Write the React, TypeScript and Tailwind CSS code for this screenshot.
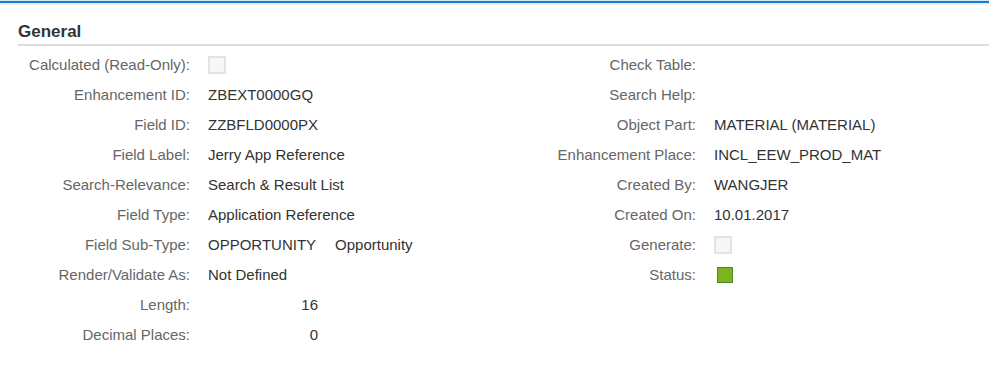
import React from 'react'

type Field = {
  label: string
  value?: React.ReactNode
}

const Checkbox = () => (
  <span className="block w-[18px] h-[18px] border-2 border-[#e3e3e3] bg-[#f7f7f7]" />
)

const StatusBox = () => (
  <span className="block w-[16px] h-[16px] ml-[3px] border border-[#4e8a27] bg-[#79b51c]" />
)

const Num = ({ children }: { children: React.ReactNode }) => (
  <span className="block w-[110px] text-right">{children}</span>
)

const leftFields: Field[] = [
  { label: 'Calculated (Read-Only):', value: <Checkbox /> },
  { label: 'Enhancement ID:', value: 'ZBEXT0000GQ' },
  { label: 'Field ID:', value: 'ZZBFLD0000PX' },
  { label: 'Field Label:', value: 'Jerry App Reference' },
  { label: 'Search-Relevance:', value: 'Search & Result List' },
  { label: 'Field Type:', value: 'Application Reference' },
  {
    label: 'Field Sub-Type:',
    value: (
      <span className="flex gap-[19px]">
        <span>OPPORTUNITY</span>
        <span>Opportunity</span>
      </span>
    ),
  },
  { label: 'Render/Validate As:', value: 'Not Defined' },
  { label: 'Length:', value: <Num>16</Num> },
  { label: 'Decimal Places:', value: <Num>0</Num> },
]

const rightFields: Field[] = [
  { label: 'Check Table:' },
  { label: 'Search Help:' },
  { label: 'Object Part:', value: 'MATERIAL (MATERIAL)' },
  { label: 'Enhancement Place:', value: 'INCL_EEW_PROD_MAT' },
  { label: 'Created By:', value: 'WANGJER' },
  { label: 'Created On:', value: '10.01.2017' },
  { label: 'Generate:', value: <Checkbox /> },
  { label: 'Status:', value: <StatusBox /> },
]

const FieldList = ({ fields, labelWidth }: { fields: Field[]; labelWidth: string }) => (
  <div className={`grid ${labelWidth} gap-x-[18px] auto-rows-[30px]`}>
    {fields.map((f) => (
      <React.Fragment key={f.label}>
        <div className="flex items-center justify-end text-[#666666] whitespace-nowrap">{f.label}</div>
        <div className="flex items-center text-[#333333] whitespace-nowrap">{f.value}</div>
      </React.Fragment>
    ))}
  </div>
)

export default function App() {
  return (
    <div className="w-[989px] h-[384px] bg-white overflow-hidden" style={{ fontFamily: '"Liberation Sans", Arial, sans-serif' }}>
      <div className="h-[1px] bg-[#d7e6f3]" />
      <div className="h-[2px] bg-[#1b7dcc]" />
      <div className="h-[3px] bg-gradient-to-b from-[#e4e4e4] to-white" />

      <div className="pl-[18px]">
        <div className="h-[40px] flex items-end pb-[2px] border-b-2 border-[#dedede]">
          <h2 className="text-[17px] leading-[20px] font-bold text-[#333333]">General</h2>
        </div>

        <div className="grid grid-cols-[476px_1fr] pt-[4px] text-[15px] leading-[18px]">
          <FieldList fields={leftFields} labelWidth="grid-cols-[172px_1fr]" />
          <FieldList fields={rightFields} labelWidth="grid-cols-[202px_1fr]" />
        </div>
      </div>
    </div>
  )
}
